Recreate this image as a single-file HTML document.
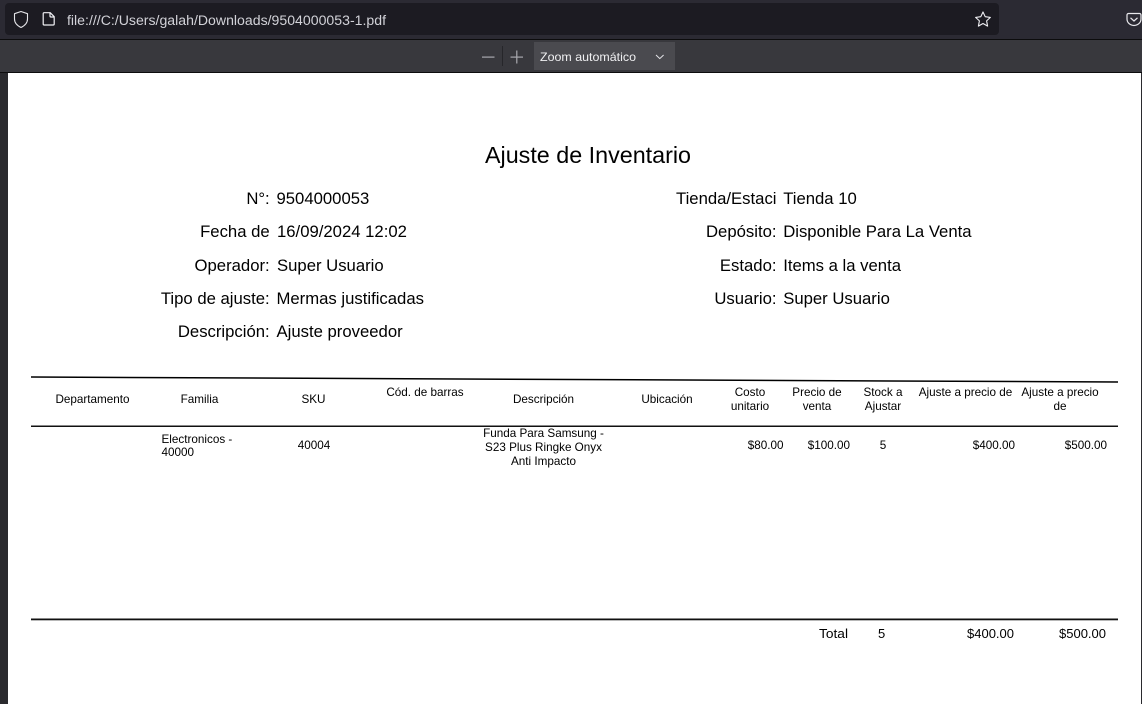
<!DOCTYPE html>
<html lang="es"><head><meta charset="utf-8"><title>9504000053-1.pdf</title>
<style>
html,body{margin:0;padding:0;background:#2a2a2e;overflow:hidden}
svg{display:block}
text{font-family:"Liberation Sans",Arial,sans-serif;fill:#000;white-space:pre}
.h{font-size:16.7px}.t{font-size:11.7px}.f{font-size:13px}.m{text-anchor:middle}.e{text-anchor:end}
</style></head><body>
<svg width="1142" height="704" viewBox="0 0 1142 704" xmlns="http://www.w3.org/2000/svg">
<rect width="1142" height="704" fill="#2a2a2e"/>
<rect width="1142" height="39" fill="#2b2a33"/>
<rect x="5" y="3" width="994" height="32" rx="4" fill="#1c1b22"/>
<rect y="39" width="1142" height="1" fill="#0c0c0d"/>
<rect y="40" width="1142" height="32" fill="#38383d"/>
<rect y="72" width="1142" height="1" fill="#0c0c0d"/>
<rect x="8" y="73" width="1133" height="631" fill="#fff"/>

<!-- shield -->
<path d="M21 11.500l6.500 2.200v5.300c0 4-2.800 6.700-6.500 8.500c-3.700-1.800-6.500-4.500-6.500-8.500v-5.300z" fill="none" stroke="#e4e4e8" stroke-width="1.100" stroke-linejoin="round"/>
<!-- file -->
<path d="M44.200 12.700h6l4 4v7.300a1 1 0 0 1-1 1h-9a1 1 0 0 1-1-1v-10.300a1 1 0 0 1 1-1zM50 12.700v3.300a1 1 0 0 0 1 1h3.200" fill="none" stroke="#f0f0f4" stroke-width="1.200" stroke-linejoin="round"/>
<text x="67" y="25" font-size="13.500" textLength="319" lengthAdjust="spacingAndGlyphs" style="fill:#d2d2d8">file:///C:/Users/galah/Downloads/9504000053-1.pdf</text>
<!-- star -->
<path d="M983 12l2.200 4.700l5.200.7l-3.800 3.500l1 5.200l-4.600-2.600l-4.600 2.600l1-5.200l-3.800-3.500l5.200-.7z" fill="none" stroke="#f0f0f4" stroke-width="1.100" stroke-linejoin="round"/>
<!-- pocket -->
<path d="M1128.500 13.500h11a1.500 1.500 0 0 1 1.500 1.500v4a7 6.500 0 0 1-14 0v-4a1.500 1.500 0 0 1 1.500-1.500z" fill="none" stroke="#e8e8ec" stroke-width="1.200"/>
<path d="M1130.500 17.800l3.500 3.200l3.500-3.200" fill="none" stroke="#e8e8ec" stroke-width="1.200"/>

<!-- zoom toolbar -->
<rect x="482" y="56.500" width="12.500" height="1.200" fill="#a9a9ae"/>
<rect x="502" y="46" width="1" height="20" fill="#26262a"/>
<rect x="510.500" y="56.500" width="12.500" height="1.200" fill="#a9a9ae"/>
<rect x="516.200" y="50.500" width="1.200" height="13" fill="#a9a9ae"/>
<rect x="534" y="42" width="141" height="28" fill="#4a4a4f"/>
<text x="540" y="61" font-size="12" textLength="96" lengthAdjust="spacingAndGlyphs" style="fill:#f0f0f2">Zoom automático</text>
<path d="M656 55l3.800 3.600l3.800-3.600" fill="none" stroke="#e4e4e8" stroke-width="1"/>

<!-- document header -->
<text x="485" y="163" font-size="23.500" textLength="206" lengthAdjust="spacingAndGlyphs">Ajuste de Inventario</text>
<text class="h e" x="269.700" y="204">N°:</text><text class="h" x="276.500" y="204">9504000053</text>
<text class="h e" x="269.700" y="237">Fecha de</text><text class="h" x="277" y="237">16/09/2024 12:02</text>
<text class="h e" x="269.700" y="271">Operador:</text><text class="h" x="277" y="271">Super Usuario</text>
<text class="h e" x="269.700" y="304">Tipo de ajuste:</text><text class="h" x="276.500" y="304">Mermas justificadas</text>
<text class="h e" x="269.700" y="337">Descripción:</text><text class="h" x="276.500" y="337">Ajuste proveedor</text>
<text class="h e" x="776.500" y="204">Tienda/Estaci</text><text class="h" x="783.200" y="204">Tienda 10</text>
<text class="h e" x="776.500" y="237">Depósito:</text><text class="h" x="783.200" y="237">Disponible Para La Venta</text>
<text class="h e" x="776.500" y="271">Estado:</text><text class="h" x="783.200" y="271">Items a la venta</text>
<text class="h e" x="776.500" y="304">Usuario:</text><text class="h" x="783.200" y="304">Super Usuario</text>

<!-- table rules -->
<path d="M31 377L1118 382" stroke="#000" stroke-width="1.500" fill="none"/>
<rect x="31" y="425.500" width="1087" height="1.500" fill="#111"/>
<rect x="31" y="618.500" width="1087" height="1.800" fill="#111"/>

<!-- table head -->
<text class="t m" x="92.500" y="403">Departamento</text>
<text class="t m" x="199.500" y="403">Familia</text>
<text class="t m" x="313.500" y="403">SKU</text>
<text class="t m" x="425" y="396">Cód. de barras</text>
<text class="t m" x="543.500" y="403">Descripción</text>
<text class="t m" x="667" y="403">Ubicación</text>
<text class="t m" x="750" y="396">Costo</text><text class="t m" x="750" y="410">unitario</text>
<text class="t m" x="817" y="396">Precio de</text><text class="t m" x="817" y="410">venta</text>
<text class="t m" x="883" y="396">Stock a</text><text class="t m" x="883" y="410">Ajustar</text>
<text class="t m" x="965.500" y="396">Ajuste a precio de</text>
<text class="t m" x="1060" y="396">Ajuste a precio</text><text class="t m" x="1060" y="410">de</text>

<!-- table row -->
<text class="t" x="161.500" y="443">Electronicos -</text><text class="t" x="161.500" y="456">40000</text>
<text class="t m" x="314" y="449">40004</text>
<text class="t m" x="543.500" y="437">Funda Para Samsung -</text>
<text class="t m" x="543.500" y="451">S23 Plus Ringke Onyx</text>
<text class="t m" x="543.500" y="465">Anti Impacto</text>
<text class="t e" x="783.500" y="449">$80.00</text>
<text class="t e" x="850" y="449">$100.00</text>
<text class="t m" x="883" y="449">5</text>
<text class="t e" x="1015" y="449">$400.00</text>
<text class="t e" x="1107" y="449">$500.00</text>

<!-- totals -->
<text class="f" x="819" y="638" textLength="29" lengthAdjust="spacingAndGlyphs">Total</text>
<text class="f" x="878" y="638">5</text>
<text class="f e" x="1014" y="638">$400.00</text>
<text class="f e" x="1106" y="638">$500.00</text>
</svg>
</body></html>
